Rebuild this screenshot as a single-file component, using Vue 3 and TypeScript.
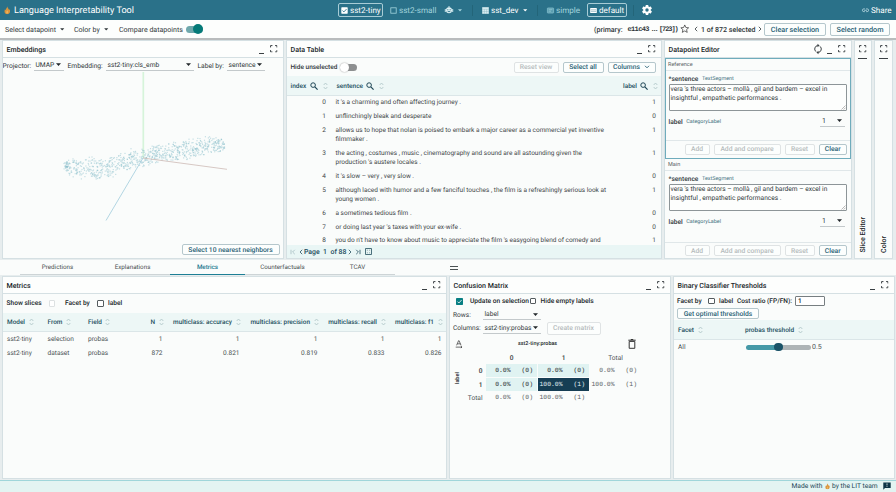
<script setup lang="ts">
interface Row { index: number; sentence: string; label: number }
interface Dot { x: number; y: number }

const rows: Row[] = [
  { index: 0, sentence: "it 's a charming and often affecting journey .", label: 1 },
  { index: 1, sentence: 'unflinchingly bleak and desperate', label: 0 },
  { index: 2, sentence: 'allows us to hope that nolan is poised to embark a major career as a commercial yet inventive\nfilmmaker .', label: 1 },
  { index: 3, sentence: "the acting , costumes , music , cinematography and sound are all astounding given the\nproduction 's austere locales .", label: 1 },
  { index: 4, sentence: "it 's slow – very , very slow .", label: 0 },
  { index: 5, sentence: 'although laced with humor and a few fanciful touches , the film is a refreshingly serious look at\nyoung women .', label: 1 },
  { index: 6, sentence: 'a sometimes tedious film .', label: 0 },
  { index: 7, sentence: "or doing last year 's taxes with your ex-wife .", label: 0 },
  { index: 8, sentence: "you do n't have to know about music to appreciate the film 's easygoing blend of comedy and", label: 1 },
]

const tabs = ['Predictions', 'Explanations', 'Metrics', 'Counterfactuals', 'TCAV']
const activeTab = 'Metrics'

const metricHeads = ['Model', 'From', 'Field', 'N', 'multiclass: accuracy', 'multiclass: precision', 'multiclass: recall', 'multiclass: f1']
const metricRows = [
  ['sst2-tiny', 'selection', 'probas', '1', '1', '1', '1', '1'],
  ['sst2-tiny', 'dataset', 'probas', '872', '0.821', '0.819', '0.833', '0.826'],
]

const editors = [
  { name: 'Reference', selected: true },
  { name: 'Main', selected: false },
]

// Spine of the embedding cloud: x, centre y, half thickness.
const spine = [
  [64, 166, 5], [72, 167, 10], [84, 168, 12], [105, 169, 12], [120, 163, 11], [132, 159, 10],
  [143, 158, 9], [160, 153, 9], [178, 151, 10], [195, 147, 10], [212, 145, 9], [220, 145, 8], [225, 146, 4],
]

function buildDots(count: number): Dot[] {
  let seed = 4217
  const rnd = () => {
    seed = (seed * 16807) % 2147483647
    return seed / 2147483647
  }
  const dots: Dot[] = []
  for (let i = 0; i < count; i++) {
    const x = 64 + rnd() * 160.5
    const k = Math.max(1, spine.findIndex((p) => p[0] >= x))
    const a = spine[k - 1]
    const b = spine[k]
    const t = (x - a[0]) / (b[0] - a[0])
    const half = a[2] + (b[2] - a[2]) * t
    const off = (rnd() * 1.6 + rnd() * 0.6 - 1.1) * half
    dots.push({ x: +x.toFixed(1), y: +(a[1] + (b[1] - a[1]) * t + off).toFixed(1) })
  }
  return dots
}
const dots = buildDots(820)
</script>

<template>
  <svg class="defs" width="0" height="0">
    <symbol id="full" viewBox="0 0 8 8"><path d="M.6 2.6V.6h2M5.4.6h2v2M7.4 5.4v2h-2M2.6 7.4h-2v-2" fill="none" stroke="currentColor" stroke-width="1.05" /></symbol>
    <symbol id="search" viewBox="0 0 8 8"><circle cx="3.1" cy="3.1" r="2.3" fill="none" stroke="currentColor" stroke-width="1" /><path d="M4.8 4.8 7.6 7.6" stroke="currentColor" stroke-width="1.2" /></symbol>
    <symbol id="sort" viewBox="0 0 5 8"><path d="M.7 3 2.5 1 4.3 3M.7 5 2.5 7 4.3 5" fill="none" stroke="#b3c8c9" stroke-width=".9" /></symbol>
    <symbol id="drop" viewBox="0 0 6 4"><path d="M0 .3h6L3 3.7z" fill="currentColor" /></symbol>
    <symbol id="flame" viewBox="0 0 8 10"><path d="M4 0C4 2 6 3 6 4.3L7.2 4C8 7 7 9.8 4 9.8S0 7.500 1 4l1.200.7C2.200 2.800 4 2 4 0Z" fill="#d9953e" /><path d="M4 5c1.500 1.500 1.700 4-.1 4S2.500 6.800 4 5Z" fill="#eeb45c" /></symbol>
    <symbol id="lt" viewBox="0 0 4 6"><path d="M3.200.8 1 3l2.200 2.200" fill="none" stroke="currentColor" stroke-width=".8" /></symbol>
    <symbol id="gt" viewBox="0 0 4 6"><path d="M.8.8 3 3 .8 5.200" fill="none" stroke="currentColor" stroke-width=".8" /></symbol>
  </svg>

  <div class="app">
    <header class="top">
      <svg class="logo"><use href="#flame" /></svg>
      <h1>Language Interpretability Tool</h1>
      <nav class="chips">
        <span class="chip on tiny"><svg class="i7" viewBox="0 0 7 7"><rect x=".3" y=".3" width="6.400" height="6.400" rx=".6" fill="#fff" /><path d="m1.500 3.600 1.400 1.300 2.600-2.800" fill="none" stroke="#2a7189" stroke-width=".9" /></svg>sst2-tiny</span>
        <span class="chip small"><svg class="i7" viewBox="0 0 7 7"><rect x=".8" y=".8" width="5.400" height="5.400" fill="none" stroke="#a4d5de" stroke-width=".8" /></svg>sst2-small</span>
        <span class="chip bot"><svg class="i8" viewBox="0 0 8 8"><path d="M4 0v1.500M.3 3v3M7.700 3v3" stroke="#dff2f5" stroke-width=".9" /><circle cx="4" cy="4.300" r="3" fill="#dff2f5" /><path d="M2.200 3.800h1.200M4.600 3.800h1.200M2.700 5.600h2.600" stroke="#2a7189" stroke-width=".9" /></svg><svg class="caret"><use href="#drop" /></svg></span>
        <i class="bar"></i>
        <span class="chip dev"><svg class="i7" viewBox="0 0 7 7"><rect x=".2" y=".2" width="6.600" height="6.600" fill="#d9edf1" /><path d="M.2 2.300h6.600M.2 4.500h6.600M2.400 2.300v4.500M4.600 2.300v4.500" stroke="#80adba" stroke-width=".35" /></svg><b>sst_dev</b><svg class="caret"><use href="#drop" /></svg></span>
        <i class="bar"></i>
        <span class="chip simple"><svg class="i7" viewBox="0 0 7 7"><rect x=".4" y="1" width="6.200" height="5" rx=".5" fill="#5a9db0" stroke="#8cc6d2" stroke-width=".7" /><path d="M1.600 2.700h3.800M1.600 4.200h2.400" stroke="#a4d5de" stroke-width=".6" /></svg>simple</span>
        <span class="chip on def"><svg class="i7" viewBox="0 0 7 7"><rect x=".2" y=".9" width="6.600" height="5.200" rx=".4" fill="#fff" /><path d="M1 2.800h5M1 4.400h5" stroke="#2a7189" stroke-width=".4" /></svg>default</span>
        <i class="bar last"></i>
        <svg class="gear" viewBox="-6 -6 12 12"><g fill="#fff"><rect v-for="a in 3" :key="a" x="-1.300" y="-5" width="2.600" height="10" rx=".5" :transform="`rotate(${a * 60})`" /><circle r="3.700" /></g><circle r="1.700" fill="#2a7189" /></svg>
      </nav>
      <span class="share"><svg class="link" viewBox="0 0 8 5"><path d="M3.300.9H2.100a1.600 1.600 0 0 0 0 3.200h1.200M4.700.9h1.200a1.600 1.600 0 0 1 0 3.200H4.700M2.400 2.500h3.200" fill="none" stroke="#cfeaf0" stroke-width=".8" /></svg>Share</span>
    </header>

    <section class="tools">
      <span class="t-select">Select datapoint<svg class="caret"><use href="#drop" /></svg></span>
      <span class="t-color">Color by<svg class="caret"><use href="#drop" /></svg></span>
      <span class="t-comp">Compare datapoints</span>
      <span class="switch"><i></i></span>
      <span class="prim">(primary:</span>
      <code class="hash">e11c43</code><code class="dots">...</code><code class="num">[723])</code>
      <svg class="star" viewBox="0 0 10 10"><path d="m5 1 1.200 2.700 2.900.3-2.200 1.900.7 2.900L5 7.300 2.400 8.800l.7-2.900L.9 4l2.900-.3z" fill="none" stroke="#333" stroke-width=".75" /></svg>
      <svg class="nav"><use href="#lt" /></svg>
      <span class="count">1 of 872 selected</span>
      <svg class="nav"><use href="#gt" /></svg>
      <button class="btn clear-sel">Clear selection</button>
      <button class="btn rand">Select random</button>
    </section>

    <main class="upper">
      <article class="panel">
        <div class="head"><h2>Embeddings</h2><i class="min"></i><svg class="fs"><use href="#full" /></svg></div>
        <div class="emb-ctl">
          <label class="l1">Projector:</label><span class="sel s1">UMAP<svg><use href="#drop" /></svg></span>
          <label class="l2">Embedding:</label><span class="sel s2">sst2-tiny:cls_emb<svg><use href="#drop" /></svg></span>
          <label class="l3">Label by:</label><span class="sel s3">sentence<svg><use href="#drop" /></svg></span>
        </div>
        <svg class="plot" viewBox="3 72 280 170">
          <path d="M143.300 72V158" stroke="#d6f4da" stroke-width="1.700" />
          <rect v-for="(d, i) in dots" :key="i" :x="d.x - .6" :y="d.y - .6" width="1.200" height="1.200" fill="#8dc0cd" opacity=".48" />
          <path d="M143 158 227 169.300" stroke="#cdbab5" stroke-width=".8" />
          <path d="M143 158 106 220.500" stroke="#9fcbdc" stroke-width=".8" />
        </svg>
        <div class="emb-foot"><button class="btn">Select 10 nearest neighbors</button></div>
      </article>

      <article class="panel">
        <div class="head"><h2>Data Table</h2><i class="min"></i><svg class="fs"><use href="#full" /></svg></div>
        <div class="dt-ctl">
          <span class="hide">Hide unselected</span><span class="switch off"><i></i></span>
          <button class="btn dis reset">Reset view</button>
          <button class="btn all">Select all</button>
          <button class="btn cols">Columns<svg viewBox="0 0 6 4"><path d="m1 .8 2 2 2-2" fill="none" stroke="currentColor" stroke-width=".9" /></svg></button>
        </div>
        <div class="dt-head">
          <span class="c-i">index</span><svg class="se"><use href="#search" /></svg><svg class="so"><use href="#sort" /></svg>
          <span class="c-s">sentence</span><svg class="se"><use href="#search" /></svg><svg class="so"><use href="#sort" /></svg>
          <span class="c-l">label</span><svg class="se"><use href="#search" /></svg><svg class="so"><use href="#sort" /></svg>
        </div>
        <div class="dt-body">
          <div v-for="r in rows" :key="r.index" class="dt-row">
            <span class="ri">{{ r.index }}</span><span class="rs">{{ r.sentence }}</span><span class="rl">{{ r.label }}</span>
          </div>
        </div>
        <div class="dt-foot">
          <svg class="pg dim" viewBox="0 0 6 6"><path d="M1 .8v4.400M4.800.8 2.600 3l2.200 2.200" fill="none" stroke="currentColor" stroke-width=".8" /></svg>
          <svg class="nav"><use href="#lt" /></svg><span class="p1">Page</span><span class="p2">1</span><span class="p3">of 88</span><svg class="nav"><use href="#gt" /></svg>
          <svg class="pg" viewBox="0 0 6 6"><path d="M5 .8v4.400M1.200.8 3.400 3 1.200 5.200" fill="none" stroke="currentColor" stroke-width=".8" /></svg>
          <svg class="die" viewBox="0 0 7 7"><rect x=".6" y=".6" width="5.800" height="5.800" fill="none" stroke="currentColor" stroke-width=".8" /><path d="M1.900 2.200h.7M4.400 2.200h.7M1.900 4.800h.7M4.400 4.800h.7" stroke="currentColor" stroke-width=".7" /></svg>
        </div>
      </article>

      <article class="panel">
        <div class="head">
          <h2>Datapoint Editor</h2>
          <svg class="sync" viewBox="0 0 10 10"><path d="M2.900 7.600A3.500 3.500 0 0 1 4.800 1.500M7.100 2.400A3.500 3.500 0 0 1 5.200 8.500" fill="none" stroke="currentColor" stroke-width="1" /><path d="M4.500-.3v3.600L6.600 1.500zM5.500 6.700v3.600L3.400 8.500z" fill="currentColor" /></svg>
          <i class="min"></i><svg class="fs"><use href="#full" /></svg>
        </div>
        <div v-for="e in editors" :key="e.name" class="editor" :class="{ picked: e.selected }">
          <div class="e-name">{{ e.name }}</div>
          <div class="e-body">
            <div class="e-lab"><b>*sentence</b><em>TextSegment</em></div>
            <div class="area">vera 's three actors – mollà , gil and bardem – excel in<br>insightful , empathetic performances .<svg viewBox="0 0 5 5"><path d="M.5 4.500l4-4M2.700 4.500l1.800-1.800" stroke="#777" stroke-width=".5" /></svg></div>
            <div class="e-cat"><b>label</b><em>CategoryLabel</em><span class="sel">1<svg><use href="#drop" /></svg></span></div>
          </div>
          <div class="e-foot">
            <button class="btn dis b1">Add</button><button class="btn dis b2">Add and compare</button><button class="btn dis b3">Reset</button><button class="btn b4">Clear</button>
          </div>
        </div>
      </article>

      <article v-for="n in ['Slice Editor', 'Color']" :key="n" class="panel slim">
        <svg class="fs"><use href="#full" /></svg><i class="min"></i><span>{{ n }}</span>
      </article>
    </main>

    <div class="tabs">
      <span v-for="t in tabs" :key="t" :class="{ act: t === activeTab }">{{ t }}</span>
      <i class="grip"></i>
    </div>

    <main class="lower">
      <article class="panel">
        <div class="head"><h2>Metrics</h2><i class="min"></i><svg class="fs"><use href="#full" /></svg></div>
        <div class="m-ctl"><span class="a">Show slices</span><i class="box faint"></i><span class="b">Facet by</span><i class="box"></i><span>label</span></div>
        <div class="m-row m-head"><span v-for="h in metricHeads" :key="h">{{ h }}<svg class="so"><use href="#sort" /></svg></span></div>
        <div v-for="(r, i) in metricRows" :key="i" class="m-row"><span v-for="(c, j) in r" :key="j">{{ c }}</span></div>
      </article>

      <article class="panel cm">
        <div class="head"><h2>Confusion Matrix</h2><i class="min"></i><svg class="fs"><use href="#full" /></svg></div>
        <div class="cm-ck">
          <svg class="ck" viewBox="0 0 7 7"><rect width="7" height="7" rx=".7" fill="#087f83" /><path d="m1.500 3.600 1.400 1.400 2.700-3" fill="none" stroke="#fff" stroke-width=".8" /></svg>
          <span class="a">Update on selection</span><i class="box"></i><span>Hide empty labels</span>
        </div>
        <div class="cm-sel"><label>Rows:</label><span class="sel">label<svg><use href="#drop" /></svg></span></div>
        <div class="cm-sel"><label>Columns:</label><span class="sel">sst2-tiny:probas<svg><use href="#drop" /></svg></span><button class="btn dis">Create matrix</button></div>
        <div class="cm-title">
          <svg class="rot" viewBox="0 0 9 9"><path d="M1.800 6 4 .8h.6L6.800 6M2.700 4.300h3.200M.8 8h7M6.600 6.900 7.900 8 6.600 9" fill="none" stroke="#333" stroke-width=".8" /></svg>
          <b>sst2-tiny:probas</b>
          <svg class="trash" viewBox="0 0 8 10"><path d="M1.200 2.400h5.600v6.900H1.200zM.3 1.200h7.400M2.800.5h2.400" fill="none" stroke="#333" stroke-width="1" /></svg>
        </div>
        <div class="cm-grid">
          <span class="axis">label</span>
          <span></span><span class="h">0</span><span class="h">1</span><span class="h tot">Total</span>
          <span class="rh">0</span><span class="cell"><i>0.0%</i><i>(0)</i></span><span class="cell"><i>0.0%</i><i>(0)</i></span><span class="cell sum"><i>0.0%</i><i>(0)</i></span>
          <span class="rh">1</span><span class="cell"><i>0.0%</i><i>(0)</i></span><span class="cell hot"><i>100.0%</i><i>(1)</i></span><span class="cell sum"><i>100.0%</i><i>(1)</i></span>
          <span class="rh t">Total</span><span class="cell sum"><i>0.0%</i><i>(0)</i></span><span class="cell sum"><i>100.0%</i><i>(1)</i></span>
        </div>
      </article>

      <article class="panel bt">
        <div class="head"><h2>Binary Classifier Thresholds</h2><i class="min"></i><svg class="fs"><use href="#full" /></svg></div>
        <div class="bt-ctl"><span class="a">Facet by</span><i class="box"></i><span class="b">label</span><span class="c">Cost ratio (FP/FN):</span><span class="inp">1</span></div>
        <button class="btn opt">Get optimal thresholds</button>
        <div class="bt-head"><span class="a">Facet<svg class="so"><use href="#sort" /></svg></span><span>probas threshold<svg class="so"><use href="#sort" /></svg></span></div>
        <div class="bt-row"><span class="a">All</span><span class="slider"><i></i></span><span class="v">0.5</span></div>
      </article>
    </main>

    <footer class="foot">
      <span>Made with</span><svg class="fl"><use href="#flame" /></svg><span class="by">by the LIT team</span>
      <svg class="fb" viewBox="0 0 8 8"><path d="M.3.500h7.400v5.600H2L.3 7.700z" fill="#0d3547" /><path d="M4 1.400v2M4 4.200v.8" stroke="#dff2f0" stroke-width=".8" /></svg>
    </footer>
  </div>
</template>

<style>
html, body { margin: 0; background: #fbfdfc; overflow: hidden; }
</style>

<style scoped>
.defs { position: absolute; }
.app { width: 896px; height: 492px; display: flex; flex-direction: column; overflow: hidden; background: #fafcfb; font-family: Roboto, sans-serif; font-size: 6.600px; color: #30373a; white-space: nowrap; text-rendering: geometricPrecision; }
.app *, .app { box-sizing: border-box; }
svg, i, span, button, label, b, code { flex: none; }
i, em { font-style: normal; }
h1, h2 { margin: 0; }
svg { display: block; overflow: visible; }

.top { height: 20px; flex: none; display: flex; align-items: center; background: #2a7189; color: #fff; padding-left: 4px; }
.logo { width: 6.500px; height: 8.500px; margin-right: 3.500px; }
h1 { width: 323.500px; flex: none; font-size: 9.100px; font-weight: 400; padding-top: 1px; }
.chips { display: flex; align-items: center; height: 20px; flex: none; }
.chip { display: flex; align-items: center; height: 14.500px; font-size: 8.100px; color: #a4d5de; }
.chip.on { color: #fff; border: 1px solid #a8ccd6; border-radius: 2px; }
.chip b { font-weight: 400; width: 29px; }
.i7 { width: 7px; height: 7px; margin-right: 2.500px; }
.i8 { width: 8px; height: 8px; margin-right: 5px; }
.caret { width: 4.500px; height: 2.800px; }
.tiny { width: 45px; padding-left: 2px; }
.small { width: 45px; margin-left: 7px; }
.bot { width: 21px; margin-left: 10px; }
.bot .caret { width: 4px; }
.bar { width: 1px; height: 11px; background: #236579; margin-left: 6px; }
.dev { width: 49px; margin-left: 9px; color: #fff; }
.dev .caret { margin-left: 3px; }
.simple { width: 32px; margin-left: 9px; }
.def { width: 40px; margin-left: 8px; padding-left: 2px; }
.bar.last { margin-left: 6px; }
.gear { width: 12px; height: 12px; margin-left: 7px; }
.share { display: flex; align-items: center; font-size: 8.100px; margin-left: auto; width: 34.500px; }
.link { width: 7px; height: 4.500px; margin-right: 2.500px; }

.tools { height: 20px; flex: none; display: flex; align-items: center; border-bottom: 2px solid #b9bcbd; padding-left: 5px; background: #fdfefd; font-size: 7.050px; }
.t-select { width: 69px; display: flex; align-items: center; }
.t-color { width: 45px; display: flex; align-items: center; }
.tools .caret { margin-left: 4.500px; }
.t-comp { width: 67px; }
.switch { width: 17px; height: 7px; border-radius: 4px; background: #6fa8ac; display: flex; align-items: center; justify-content: flex-end; }
.switch i { width: 10px; height: 10px; border-radius: 50%; background: #057a78; }
.prim { width: 33.500px; margin-left: 391px; font-weight: 500; }
code { font-family: "Liberation Mono", monospace; font-weight: 700; font-size: 7px; padding-top: 1px; }
.hash { width: 23px; letter-spacing: -.65px; } .dots { width: 8.500px; letter-spacing: -2.200px; } .num { width: 20.500px; letter-spacing: -1.100px; }
.star { width: 9.500px; height: 9.500px; margin-right: 5px; }
.nav { width: 4px; height: 6px; }
.count { width: 53px; margin: 0 3.500px 0 3px; font-weight: 500; }
.btn { font: 500 6.750px Roboto, sans-serif; padding: 0; height: 11px; border: 1px solid #b5c7cc; border-radius: 2px; background: #fcfefd; color: #276074; display: flex; align-items: center; justify-content: center; white-space: nowrap; text-rendering: geometricPrecision; }
.btn.dis { color: #b5bbbc; border-color: #dfe3e4; }
.clear-sel { width: 62px; margin-left: 2.500px; height: 13px; font-size: 7.250px; }
.rand { width: 60px; margin-left: 4px; height: 13px; font-size: 7.250px; }

.upper { height: 220px; flex: none; display: grid; grid-template-columns: 282px 376px 188px 18.500px 19px; gap: 2px; padding: 0 1.500px 1px; background: #e7edee; align-items: stretch; }
.panel { border: 1px solid #d5e0e3; background: #fafcfb; display: flex; flex-direction: column; min-width: 0; overflow: hidden; }
.head { height: 17px; flex: none; border-bottom: 1px solid #d5e0e3; display: flex; align-items: center; padding: 0 5.500px 0 4px; background: #fdfefd; color: #202629; }
h2 { font-size: 7.100px; font-weight: 500; margin-right: auto; }
.fs { width: 7.500px; height: 7.500px; color: #3a4043; }
.min { width: 5.500px; height: 1px; background: #3a4043; margin: 8px 5.500px 0 0; }
.sel { display: flex; align-items: center; justify-content: space-between; border-bottom: 1px solid #c3c9cb; height: 11px; padding: 0 2.500px 0 2px; }
.sel svg { width: 5px; height: 3.300px; color: #202629; }

.emb-ctl { height: 15px; flex: none; display: flex; align-items: center; font-size: 6.700px; }
.l1 { width: 31px; } .s1 { width: 30px; } .l2 { width: 38px; margin-left: 4px; } .s2 { width: 88px; } .l3 { width: 29px; margin-left: 4px; } .s3 { width: 38px; }
.plot { width: 280px; height: 170px; flex: none; margin-top: -1px; }
.emb-foot { display: flex; justify-content: flex-end; padding: 2px 3px 0 0; }
.emb-foot .btn { width: 98px; }

.dt-ctl { height: 18px; flex: none; display: flex; align-items: center; padding-left: 4px; }
.hide { width: 49px; font-weight: 500; font-size: 6.500px; }
.switch.off { background: #8d8f90; justify-content: flex-start; margin-left: 2px; width: 15px; }
.switch.off i { background: #fff; box-shadow: 0 0 1.500px #888; margin-left: -2px; width: 9px; height: 9px; }
.reset { width: 45px; margin-left: 157px; } .all { width: 41px; margin-left: 4px; } .cols { width: 48px; margin-left: 4px; }
.cols svg { width: 6px; height: 4px; margin-left: 4px; }
.dt-head { height: 20px; flex: none; display: flex; align-items: center; background: #edf7f6; border-bottom: 1px solid #dbe6e8; padding-left: 4px; font-weight: 500; color: #24505f; font-size: 6.500px; }
.se { width: 8px; height: 8px; color: #1d4555; }
.so { width: 5px; height: 8px; }
.dt-head .so { margin-left: 5px; }
.c-i { width: 19px; } .c-s { width: 29.500px; margin-left: 9px; } .c-l { width: 17px; margin-left: 239px; }
.dt-body { flex: 1; min-height: 0; overflow: hidden; }
.dt-row { display: flex; line-height: 9px; padding: 2.450px 0 2.450px; color: #3e4648; font-size: 6.480px; }
.ri { width: 39.500px; text-align: right; } .rs { width: 313px; padding-left: 9.500px; white-space: pre; } .rl { width: 17px; text-align: right; }
.dt-foot { height: 13px; flex: none; display: flex; align-items: center; background: #e9f6f5; padding-left: 3px; color: #24505f; font-weight: 500; font-size: 6.900px; }
.pg { width: 6px; height: 6px; } .dim { opacity: .35; margin-right: 3px; }
.p1 { width: 19px; margin-left: 1.500px; } .p2 { width: 7.500px; } .p3 { width: 17.500px; }
.dt-foot .pg:not(.dim) { margin-left: 3px; }
.die { width: 7px; height: 7px; margin-left: 3.500px; }

.sync { width: 10px; height: 10px; margin-right: 3.500px; color: #3a4043; }
.editor { height: 100.500px; flex: none; display: flex; flex-direction: column; }
.editor.picked { border: 1px solid #6facbc; }
.e-name { height: 12px; flex: none; border-bottom: 1px solid #e0e7e9; font-size: 5.500px; line-height: 12px; padding-left: 2.500px; color: #596164; }
.e-body { flex: 1; padding: 2.500px 2.500px 0 3px; }
.editor:not(.picked) .e-body { padding: 3px 3.500px 0 4px; }
.editor:not(.picked) .e-name { padding-left: 3.500px; }
.e-lab, .e-cat { display: flex; align-items: center; height: 10px; }
.e-lab b, .e-cat b { font-weight: 500; font-size: 6.600px; margin-right: 3.500px; }
em { font-size: 5.450px; color: #42717f; }
.area { position: relative; height: 27.500px; border: 1px solid #8d9598; border-radius: 1px; padding: .5px 1px; line-height: 9.200px; font-size: 6.600px; background: #fdfefd; }
.area svg { position: absolute; right: 0; bottom: 0; width: 5px; height: 5px; }
.e-cat { height: 18px; padding-top: 3px; }
.e-cat .sel { width: 25px; margin-left: auto; margin-right: 2px; padding: 0 3px 0 2px; font-size: 7px; }
.e-foot { height: 17.500px; flex: none; border-top: 1px solid #e0e7e9; display: flex; align-items: center; justify-content: flex-end; gap: 4px; padding-right: 3.500px; }
.picked .e-foot { padding-right: 2.500px; }
.b1 { width: 25px; } .b2 { width: 67px; } .b3 { width: 30px; } .b4 { width: 28.500px; }

.slim { align-items: center; padding-top: 4px; background: #fafcfb; }
.slim .min { width: 9px; margin: 5px 0 0; }
.slim span { writing-mode: vertical-rl; transform: rotate(180deg); font-size: 7.050px; font-weight: 500; margin-top: auto; margin-bottom: 5px; color: #202629; }

.tabs { height: 15px; flex: none; display: flex; padding-left: 20px; background: #fafcfb; }
.tabs span { width: 75px; text-align: center; line-height: 15px; font-size: 6.250px; border-bottom: 1px solid #cdd4d6; color: #4b5254; }
.tabs .act { color: #1d7890; border-bottom-color: #1d7f95; font-weight: 500; }
.grip { width: 8px; height: 3.500px; border: solid #4b5254; border-width: 1px 0; margin: 6px 0 0 55px; }

.lower { height: 204.500px; flex: none; display: grid; grid-template-columns: 445px 222px 222px; gap: 2px; padding: 1px 1.500px 1px; background: #e7edee; }
.m-ctl { height: 18.500px; flex: none; display: flex; align-items: center; padding-left: 4px; font-weight: 500; color: #202629; font-size: 6.600px; }
.box { width: 6.500px; height: 6.500px; border: 1px solid #555c5f; border-radius: 1px; background: #fff; }
.box.faint { border-color: #dde1e2; }
.m-ctl .a { width: 42px; } .m-ctl .b { width: 32px; margin-left: 10px; } .m-ctl span:last-child { margin-left: 4.500px; }
.m-row { display: grid; grid-template-columns: 40.500px 40.500px 48px 36.500px 77px 78px 67px 57px; padding-left: 4.500px; height: 14px; flex: none; align-items: center; color: #4b5254; font-size: 6.550px; }
.m-row span { display: flex; align-items: center; }
.m-row span:nth-child(n + 4) { justify-content: flex-end; padding-right: 10px; }
.m-head { height: 19.500px; background: #edf7f6; border-bottom: 1px solid #dbe6e8; font-weight: 500; color: #24505f; font-size: 6.450px; }
.m-head .so { margin-left: 3.500px; }
.m-row.m-head span:nth-child(n + 4) { padding-right: 9px; }

.cm-ck { height: 14px; flex: none; display: flex; align-items: center; padding-left: 6px; font-weight: 500; color: #202629; font-size: 6.650px; }
.ck { width: 7px; height: 7px; }
.cm-ck .a { width: 62px; margin-left: 7.500px; }
.cm-ck .box { margin-left: -2.500px; }
.cm-ck span:last-child { margin-left: 4.500px; }
.cm-sel { height: 13.500px; flex: none; display: flex; align-items: center; padding-left: 3.500px; }
.cm-sel label { width: 29.500px; }
.cm-sel .sel { width: 58px; }
.cm-sel .btn { width: 54px; height: 12.500px; margin-left: 6px; }
.cm-title { height: 17px; flex: none; display: flex; align-items: center; padding-left: 5px; }
.rot { width: 8px; height: 8px; }
.cm-title b { width: 98px; margin-left: 36px; padding-left: 19.500px; font-weight: 500; font-size: 5.400px; color: #202629; }
.trash { width: 8px; height: 10px; margin-left: 31.500px; }
.cm-grid { display: grid; grid-template-columns: 10px 25px 52px 52px 52px; grid-template-rows: 11.500px 14px 14px 12.500px; padding-left: 1px; }
.axis { grid-row: 1 / 5; writing-mode: vertical-rl; transform: rotate(180deg); font-size: 5.500px; font-weight: 500; display: flex; align-items: center; justify-content: center; padding-bottom: 1px; padding-right: 3px; color: #202629; }
.h, .rh { display: flex; align-items: center; justify-content: center; font-weight: 500; }
.tot { font-weight: 400; color: #4b5254; }
.rh { justify-content: flex-end; padding-right: 3px; }
.rh.t { font-weight: 400; color: #4b5254; }
.cell { display: flex; align-items: center; justify-content: flex-end; gap: 11px; padding-right: 3.500px; background: #e0f3f2; border: solid #fafcfb; border-width: 0 1px 1px 0; font: 6.400px "Liberation Mono", monospace; color: #202629; }
.cell.sum { background: none; color: #596164; }
.cell.hot { background: #163e54; color: #e4f2f4; }

.bt-ctl { height: 14px; flex: none; display: flex; align-items: center; padding-left: 3.500px; font-weight: 500; color: #202629; font-size: 6.550px; }
.bt-ctl .a { width: 31px; } .bt-ctl .b { width: 18px; margin-left: 4.500px; } .bt-ctl .c { width: 58px; }
.inp { width: 29.500px; height: 10.500px; border: 1px solid #777e81; border-radius: 1px; line-height: 9px; padding-left: 2px; background: #fff; }
.opt { width: 82px; margin: 0 0 1px 3.500px; flex: none; }
.bt-head { height: 20px; flex: none; display: flex; align-items: center; background: #edf7f6; border-bottom: 1px solid #dbe6e8; padding-left: 4.500px; font-weight: 500; color: #24505f; font-size: 6.500px; }
.bt-head span { display: flex; align-items: center; }
.bt-head .a { width: 67px; }
.bt-head .so { margin-left: 4px; }
.bt-row { height: 14px; flex: none; display: flex; align-items: center; padding-left: 4.500px; color: #4b5254; }
.bt-row .a { width: 68px; }
.slider { width: 64.500px; height: 5px; border-radius: 2.500px; background: linear-gradient(90deg, #4699a7 50%, #aeb4b6 50%); display: flex; align-items: center; justify-content: center; }
.slider i { width: 8.500px; height: 8.500px; border-radius: 50%; background: #1b5368; }
.v { margin-left: 1.500px; font-size: 7px; }

.foot { flex: 1; display: flex; align-items: center; justify-content: flex-end; background: #e3f4f2; border-top: 1px solid #9fd6da; padding-right: 5.500px; font-size: 6.700px; color: #1e4656; }
.fl { width: 5px; height: 6.500px; margin: 0 2px 0 2.500px; }
.by { width: 46.500px; }
.fb { width: 8px; height: 8px; margin-left: 4px; }
</style>
